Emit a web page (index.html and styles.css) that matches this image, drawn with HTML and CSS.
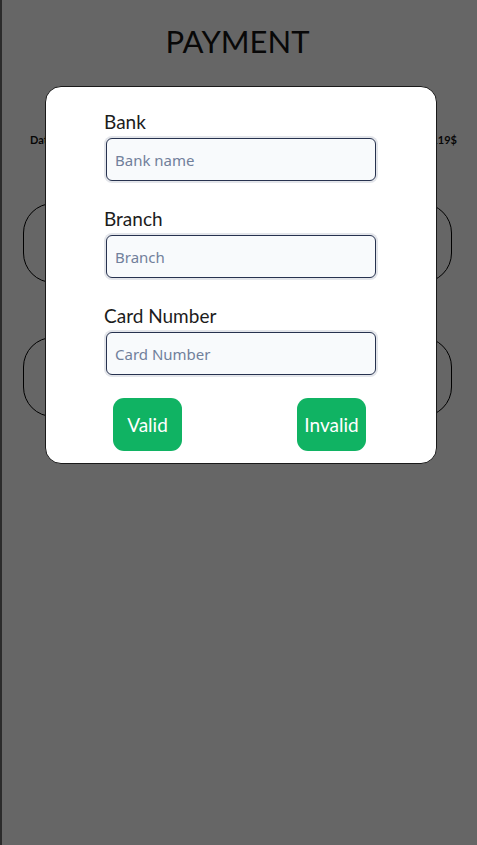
FILE: index.html
```html
<!DOCTYPE html>
<html lang="en">
<head>
<meta charset="utf-8">
<title>Payment</title>
<link rel="stylesheet" href="styles.css">
</head>
<body>
<div class="page">
  <h1 class="title">PAYMENT</h1>
  <div class="summary">
    <span class="summary-item">Date: 12/05/2023</span>
    <span class="summary-item">Total: 119$</span>
  </div>
  <div class="option">Cash</div>
  <div class="option">Card</div>
</div>
<div class="overlay"></div>
<div class="modal">
  <div class="field">
    <label class="label" for="bank">Bank</label>
    <input class="input" id="bank" type="text" placeholder="Bank name">
  </div>
  <div class="field">
    <label class="label" for="branch">Branch</label>
    <input class="input" id="branch" type="text" placeholder="Branch">
  </div>
  <div class="field">
    <label class="label" for="card">Card Number</label>
    <input class="input" id="card" type="text" placeholder="Card Number">
  </div>
  <div class="actions">
    <button class="btn" type="button">Valid</button>
    <button class="btn" type="button">Invalid</button>
  </div>
</div>
</body>
</html>
```
FILE: styles.css
```css
html, body {
  margin: 0;
  padding: 0;
  height: 100%;
}
body {
  background: #ffffff;
  font-family: Lato, "Open Sans", sans-serif;
  color: #111;
}
.page {
  box-sizing: border-box;
  min-height: 100%;
  border-left: 2px solid #6c6c6c;
  padding: 0 25px 0 21px;
}
.title {
  margin: 0;
  padding-top: 22px;
  height: 60px;
  box-sizing: border-box;
  text-align: center;
  font-size: 31px;
  font-weight: 400;
  line-height: 38px;
  letter-spacing: 0;
  color: #151515;
}
.summary {
  display: flex;
  justify-content: space-between;
  margin-top: 73px;
  padding: 0 0 0 7px;
  margin-right: -5px;
  font-size: 11px;
  font-weight: 700;
  line-height: 14px;
}
.option {
  box-sizing: border-box;
  height: 80px;
  margin-top: 56px;
  border: 1px solid #000;
  border-radius: 30px;
  display: flex;
  align-items: center;
  justify-content: center;
  font-size: 16px;
}
.option + .option {
  margin-top: 54px;
}
.overlay {
  position: fixed;
  inset: 0;
  background: rgba(0, 0, 0, 0.6);
}
.modal {
  position: absolute;
  left: 45px;
  top: 86px;
  width: 392px;
  height: 378px;
  box-sizing: border-box;
  background: #fff;
  border: 1px solid #1a1a1a;
  border-radius: 16px;
  padding: 23px 61px 0 60px;
  display: flex;
  flex-direction: column;
}
.field {
  display: flex;
  flex-direction: column;
}
.field + .field {
  margin-top: 26px;
}
.label {
  font-size: 19px;
  line-height: 24px;
  color: #1c1c1c;
  margin-left: -2px;
}
.input {
  box-sizing: border-box;
  margin-top: 4px;
  width: 270px;
  height: 43px;
  margin-left: 0;
  border: 1px solid #27324f;
  border-radius: 6px;
  box-shadow: 0 0 0 2px #e3e5ea;
  background: #f8fafc;
  padding: 0 8px;
  font-family: "Noto Sans", "Open Sans", sans-serif;
  font-size: 15px;
  color: #333;
  outline: none;
}
.input::placeholder {
  color: #71809b;
}
.actions {
  display: flex;
  justify-content: space-between;
  margin-top: 23px;
  padding: 0 9px 0 7px;
}
.btn {
  width: 69px;
  height: 53px;
  border: none;
  border-radius: 11px;
  background: #10b363;
  color: #fff;
  font-family: Lato, "Open Sans", sans-serif;
  font-size: 19px;
  padding: 0;
}
```
